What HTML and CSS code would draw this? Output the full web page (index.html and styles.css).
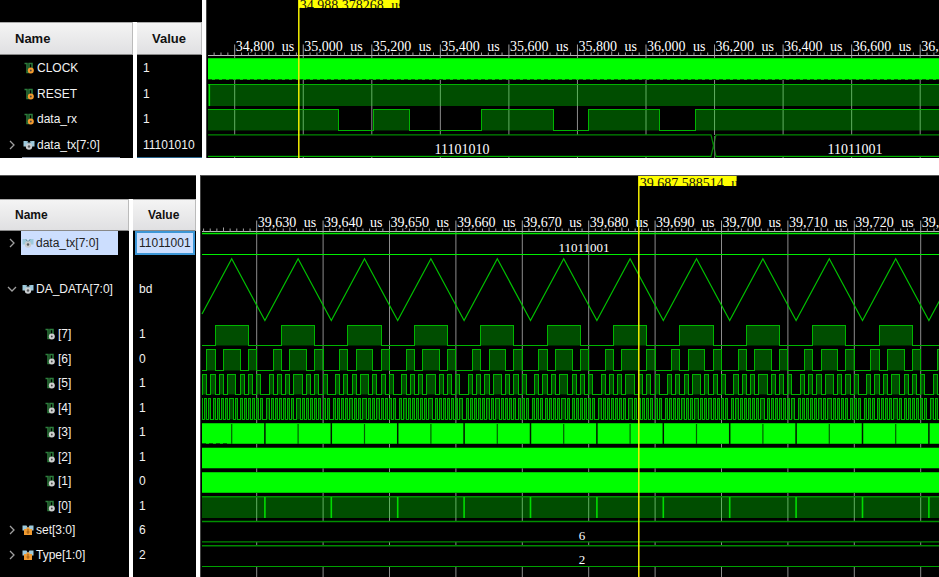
FILE: index.html
```html
<!DOCTYPE html>
<html lang="en">
<head>
<meta charset="utf-8">
<title>Waveform viewer</title>
<link rel="stylesheet" href="styles.css">
</head>
<body>
<svg class="defs" aria-hidden="true">
  <symbol id="bit" viewBox="0 0 11 12">
    <path d="M1 1.5H3.5V10.5H5.5V1.5H8.5V7" fill="none" stroke="#2c7d3c" stroke-width="1.5"/>
    <circle cx="7.3" cy="8.5" r="3" fill="currentColor"/>
    <circle class="pip" cx="7.3" cy="8.500" r="0.9"/>
  </symbol>
  <symbol id="bus" viewBox="0 0 12 12">
    <path d="M0.5 2H4.5L6 4.5L7.500 2H11.500V7.500H0.500Z" fill="#9cc9dc"/>
    <path d="M4 2.500L6 5L8 2.500" fill="none" stroke="#5f7f8c"/>
    <circle cx="6" cy="7.500" r="3.200" fill="#c9cdd0"/>
    <circle cx="6" cy="7.500" r="1.200" fill="#55595c"/>
  </symbol>
  <symbol id="const" viewBox="0 0 12 12">
    <path d="M0.500 1.500H4.500L6 4L7.500 1.500H11.500V6.500H0.500Z" fill="#9cc9dc"/>
    <path d="M2 5H4.500V3.500H7.500V5H10V11H2Z" fill="#f09a30"/>
    <path d="M6 5V10M4.500 8H7.500" stroke="#9a5a10" fill="none"/>
  </symbol>
  <symbol id="right" viewBox="0 0 8 10"><path d="M2 1L6 5L2 9" fill="none" stroke="#a0a0a0" stroke-width="1.300"/></symbol>
  <symbol id="down" viewBox="0 0 10 8"><path d="M1 2L5 6L9 2" fill="none" stroke="#a0a0a0" stroke-width="1.300"/></symbol>
</svg>

<main>
<section class="panel">
  <table class="signals signals-a">
    <thead><tr><th>Name</th><th>Value</th></tr></thead>
    <tbody>
      <tr><td><span class="name"><svg class="icon orange"><use href="#bit"/></svg>CLOCK</span></td><td>1</td></tr>
      <tr><td><span class="name"><svg class="icon orange"><use href="#bit"/></svg>RESET</span></td><td>1</td></tr>
      <tr><td><span class="name"><svg class="icon orange"><use href="#bit"/></svg>data_rx</span></td><td>1</td></tr>
      <tr class="cut"><td><button aria-label="Expand data_tx"><svg><use href="#right"/></svg></button><span class="name"><svg class="icon"><use href="#bus"/></svg>data_tx[7:0]</span></td><td>11101010</td></tr>
    </tbody>
  </table>
  <svg class="wave" id="wave-a" height="158" role="img" aria-label="Serial waveform"></svg>
</section>

<section class="panel">
  <table class="signals signals-b">
    <thead><tr><th>Name</th><th>Value</th></tr></thead>
    <tbody>
      <tr class="selected"><td><button aria-label="Expand data_tx"><svg><use href="#right"/></svg></button><span class="name"><svg class="icon"><use href="#bus"/></svg>data_tx[7:0]</span></td><td>11011001</td></tr>
      <tr><td><button aria-label="Collapse DA_DATA"><svg><use href="#down"/></svg></button><span class="name"><svg class="icon"><use href="#bus"/></svg>DA_DATA[7:0]</span></td><td>bd</td></tr>
      <tr class="child"><td><span class="name"><svg class="icon"><use href="#bit"/></svg>[7]</span></td><td>1</td></tr>
      <tr class="child"><td><span class="name"><svg class="icon"><use href="#bit"/></svg>[6]</span></td><td>0</td></tr>
      <tr class="child"><td><span class="name"><svg class="icon"><use href="#bit"/></svg>[5]</span></td><td>1</td></tr>
      <tr class="child"><td><span class="name"><svg class="icon"><use href="#bit"/></svg>[4]</span></td><td>1</td></tr>
      <tr class="child"><td><span class="name"><svg class="icon"><use href="#bit"/></svg>[3]</span></td><td>1</td></tr>
      <tr class="child"><td><span class="name"><svg class="icon"><use href="#bit"/></svg>[2]</span></td><td>1</td></tr>
      <tr class="child"><td><span class="name"><svg class="icon"><use href="#bit"/></svg>[1]</span></td><td>0</td></tr>
      <tr class="child"><td><span class="name"><svg class="icon"><use href="#bit"/></svg>[0]</span></td><td>1</td></tr>
      <tr><td><button aria-label="Expand set"><svg><use href="#right"/></svg></button><span class="name"><svg class="icon"><use href="#const"/></svg>set[3:0]</span></td><td>6</td></tr>
      <tr><td><button aria-label="Expand Type"><svg><use href="#right"/></svg></button><span class="name"><svg class="icon"><use href="#const"/></svg>Type[1:0]</span></td><td>2</td></tr>
    </tbody>
  </table>
  <svg class="wave" id="wave-b" height="402" role="img" aria-label="Triangle output waveform"></svg>
</section>
</main>
<script src="waves.js"></script>
</body>
</html>
```
FILE: styles.css
```css
* { box-sizing: border-box; }

body {
  margin: 0;
  background: #fff;
  color: #f2f2f2;
  font: 12px/16px "Liberation Sans", Arial, sans-serif;
  overflow: hidden;
}

.defs { position: absolute; width: 0; height: 0; }

main { display: flex; flex-direction: column; gap: 17px; }

.panel { display: flex; align-items: stretch; gap: 4px; }

.signals {
  display: grid;
  column-gap: 4px;
  flex: none;
  background: #fff;
}
.signals-a {
  grid-template-columns: 133px 65px;
  grid-template-rows: 22px 33px repeat(4, minmax(0, 1fr));
}
.signals-b {
  grid-template-columns: 129px 63px;
  grid-template-rows: 24px 32px 24px 67px repeat(10, minmax(0, 1fr)) 10px;
}
.signals::before { content: ""; grid-column: 1 / -1; background: #000; }
.signals-b::before { border-top: 1px solid #555; }
.signals-b::after {
  content: "";
  grid-column: 1 / -1;
  background: linear-gradient(90deg, #000 129px, #fff 129px 133px, #000 133px);
}
.signals thead, .signals tbody, .signals tr { display: contents; }

th {
  display: flex;
  align-items: center;
  padding: 0 15px;
  color: #111;
  background: linear-gradient(#f4f4f4, #e0e0e2);
  border-top: 1px solid #aaa;
  border-right: 1px solid #bbb;
  border-bottom: 1px solid #888;
}
.signals-a th { font-size: 13px; }

td {
  display: flex;
  align-items: center;
  background: #000;
  padding: 0 6px;
  min-width: 0;
}
td:first-child { position: relative; padding: 0 0 0 21px; }
.child td:first-child { padding-left: 43px; }

.name {
  display: flex;
  align-items: center;
  gap: 2px;
  padding-left: 1px;
}
.signals-a .name { padding-left: 2px; }
.icon { width: 12px; height: 12px; color: #d0d0d0; }
.orange { color: #f39a2e; }
.pip { fill: #444; }
.orange .pip { fill: #ffe0b0; }

button {
  position: absolute;
  left: 7px;
  display: flex;
  align-items: center;
  justify-content: center;
  width: 10px;
  height: 16px;
  padding: 0;
  border: 0;
  background: none;
}
button svg { width: 10px; height: 10px; }

.selected .name {
  width: 97px;
  height: 24px;
  background: #ccdefe;
  color: #222;
}
.selected td:last-child {
  padding: 0 2px;
  background: #ccdefe;
  color: #222;
  border: 2px solid #3c96d6;
  margin: 0 1px 0 2px;
  box-shadow: -2px 0 #000, 1px 0 #000;
}
.cut td:last-child { border-bottom: 1px solid #28648c; }
.cut td:first-child {
  background: linear-gradient(#8a93a5, #8a93a5) 22px 100% / 98px 1px no-repeat #000;
}

.wave {
  display: block;
  flex: 1;
  width: 0;
  min-width: 0;
  background: #000;
  border-left: 1px solid #444;
}
#wave-b { border-top: 1px solid #555; }

.wave text {
  fill: #fff;
  font-family: "Liberation Serif", "Times New Roman", serif;
  font-size: 14px;
}
.wave .bus-text { text-anchor: middle; }
#wave-b .bus-text { font-size: 13px; }
.wave .cursor-text { fill: #111; }
.wave .trace { fill: none; shape-rendering: crispEdges; }
```
FILE: waves.js
```javascript
const NS = "http://www.w3.org/2000/svg";
const FILL = "rgba(0,255,0,.3)";
const EDGE = "#00b400";
let END = 0;

function add(parent, tag, attrs, text) {
  const el = document.createElementNS(NS, tag);
  for (const key in attrs) el.setAttribute(key, attrs[key]);
  if (text) el.textContent = text;
  parent.appendChild(el);
  return el;
}
function rect(p, x, y, w, h, fill) {
  return add(p, "rect", { x, y, width: w, height: h, fill });
}
function line(p, x1, y1, x2, y2, stroke, width = 1) {
  return add(p, "line", { x1, y1, x2, y2, stroke, "stroke-width": width });
}

// Number and unit, with the unit set one fixed cell away.
function label(p, x, y, number, cls = "") {
  const t = add(p, "text", { x, y, class: cls });
  add(t, "tspan", {}, number + " ");
  add(t, "tspan", { dx: 4 }, "us");
}

function ruler(p, start, pitch, base, first, step) {
  line(p, 1, base, END, base, "#b8b8b8");
  for (let i = -9; start + i * pitch / 10 < END; i++) {
    const x = start + i * pitch / 10;
    if (x < 2) continue;
    if (i % 10 === 0) {
      line(p, x, base - 11, x, base, "#a0a0a0");
      label(p, x + 1, base - 5, (first + i / 10 * step).toLocaleString("en-US"));
    } else {
      line(p, x, base - (i % 5 === 0 ? 4 : 3), x, base, "#a0a0a0");
    }
  }
}
function grid(p, start, pitch, spans) {
  for (let x = start; x < END; x += pitch)
    for (const [a, b] of spans) line(p, x, a, x, b, "#8c8c8c");
}

// Digital trace: level flips at each edge position.
function bit(p, edges, startHigh, hi, lo) {
  let high = startHigh, x = 1;
  let d = `M1 ${high ? hi : lo}`;
  for (const e of [...edges.filter(v => v < END), END]) {
    if (high) rect(p, x, hi, e - x, lo - hi, FILL);
    d += `H${e}`;
    if (e !== END) d += `V${high ? lo : hi}`;
    high = !high;
    x = e;
  }
  add(p, "path", { d, class: "trace", stroke: EDGE });
}
function busRow(p, hi, lo, top, bottom) {
  line(p, 1, hi, END, hi, top, 1.4);
  line(p, 1, lo, END, lo, bottom, 1.2);
}
function solid(p, hi, lo) {
  rect(p, 1, hi, END, lo - hi, "#008c00");
  rect(p, 1, hi + 0.5, END, lo - hi - 1, "#00ff00");
}
function cursor(p, x, y, baseline, number, w, boxHeight) {
  line(p, x, y, x, 1000, "#f4f000", 1.5);
  const box = add(p, "svg", { x, y, width: w, height: boxHeight });
  rect(box, 0, 0, w, boxHeight, "#ffff00");
  label(box, 1, baseline, number, "cursor-text");
}

function drawSerial(p) {
  END = p.clientWidth || p.getBoundingClientRect().width;
  grid(p, 27.7, 68.55, [[56, 135], [157, 158]]);
  ruler(p, 27.7, 68.55, 55.5, 34800, 200);
  solid(p, 58, 80);
  add(p, "line", { x1: 1, x2: END, y1: 79.5, y2: 79.5, stroke: "#006000", "stroke-dasharray": "4 3" });
  rect(p, 1, 84, END, 22, FILL);
  line(p, 1, 84.5, END, 84.5, EDGE);
  line(p, 2.4, 84, 2.4, 106, "#00e000", 1.4);
  bit(p, [131.5, 166.8, 202.5, 274.3, 346, 381.3, 452.5, 488.3], true, 109.5, 130.5);
  add(p, "path", { d: `M1 134.8H504L509 156.300H${END}M1 156.300H504L509 134.800H${END}`, fill: "none", stroke: "#008800", "stroke-width": 1.2 });
  line(p, 507.6, 136, 507.6, 158, "#607060");
  line(p, 1, 156.5, 504, 156.5, EDGE);
  line(p, 509, 156.5, END, 156.5, EDGE);
  add(p, "text", { x: 255, y: 154, class: "bus-text" }, "11101010");
  add(p, "text", { x: 648, y: 154, class: "bus-text" }, "11011001");
  cursor(p, 91.8, 0, 10, "34,988.378268", 101, 8);
}

function drawTriangle(p) {
  END = p.clientWidth || p.getBoundingClientRect().width;
  const period = 66.4, trough = -2.5;
  grid(p, 55.7, period, [[56, 346], [366, 370], [391, 402]]);
  ruler(p, 55.7, period, 55.5, 39630, 10);
  busRow(p, 57.5, 78.5, "#00ee00", "#00ee00");
  add(p, "text", { x: 383, y: 76, class: "bus-text" }, "11011001");

  let d = "M1 138";
  for (let x = trough; x < END; x += period)
    d += `L${x + period / 2} 82.700L${x + period} 144.500`;
  add(p, "path", { d, fill: "none", stroke: "#00c000", "stroke-width": 1.2 });

  // Each bit toggles at equal steps of the ramp, mirrored about the peak.
  const rows = [[1, 149.5, 169.5], [2, 173.5, 194.5], [3, 198.5, 218.5], [4, 222.5, 243.5]];
  for (const [order, hi, lo] of rows) {
    const steps = 2 ** order, half = period / 2, edges = [];
    for (let base = trough; base < END; base += period) {
      for (let i = 1; i < steps; i++) edges.push(base + i * half / steps);
      for (let i = steps - 1; i > 0; i--) edges.push(base + period - i * half / steps);
    }
    const visible = edges.filter(x => x > 1);
    bit(p, visible, (edges.length - visible.length) % 2 === 1, hi, lo);
  }

  solid(p, 247, 268);
  for (let x = trough + period / 2; x < END; x += period) {
    line(p, x, 248, x, 268, "#006000", 1.2);
    line(p, x + period / 2, 247, x + period / 2, 268, "#001800", 1.5);
  }
  add(p, "line", { x1: 1, x2: 29, y1: 267.5, y2: 267.5, stroke: "#006000", "stroke-dasharray": "4 3" });
  solid(p, 271.5, 292.5);
  solid(p, 296, 317);

  rect(p, 1, 320, END, 22, FILL);
  line(p, 1, 320.8, END, 320.8, "#009400", 1.6);
  for (let x = trough + period; x < END; x += period)
    line(p, x, 321, x, 342, "#00dc00", 1.6);

  busRow(p, 345.5, 365.8, "#009000", "#008800");
  busRow(p, 369.7, 390.5, "#008800", "#00a000");
  add(p, "text", { x: 381, y: 364, class: "bus-text" }, "6");
  add(p, "text", { x: 381, y: 388, class: "bus-text" }, "2");
  cursor(p, 437.8, 0, 12, "39,687.588514", 98, 10);
}

drawSerial(document.getElementById("wave-a"));
drawTriangle(document.getElementById("wave-b"));
```
